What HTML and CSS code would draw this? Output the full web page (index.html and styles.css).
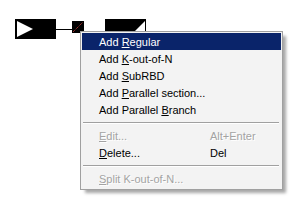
FILE: index.html
```html
<!DOCTYPE html>
<html>
<head>
<meta charset="utf-8">
<link rel="stylesheet" href="styles.css">
</head>
<body>
<div class="canvas">
  <svg class="diagram" width="298" height="60" viewBox="0 0 298 60">
    <rect x="15" y="19" width="41" height="20" fill="#000"/>
    <polygon points="17,21 33,29 17,37" fill="#fff"/>
    <line x1="56" y1="29.5" x2="72" y2="29.5" stroke="#000" stroke-width="1"/>
    <rect x="72" y="21" width="12" height="12" fill="#000"/>
    <line x1="73" y1="32" x2="83" y2="22" stroke="#e04040" stroke-width="1" stroke-dasharray="1 1"/>
    <rect x="105" y="19" width="41" height="20" fill="#000"/>
    <polygon points="145,21 127,39 145,39" fill="#fff"/>
  </svg>
  <div class="menu">
    <div class="item active"><span class="label">Add <u>R</u>egular</span></div>
    <div class="item"><span class="label">Add <u>K</u>-out-of-N</span></div>
    <div class="item"><span class="label">Add <u>S</u>ubRBD</span></div>
    <div class="item"><span class="label">Add <u>P</u>arallel section...</span></div>
    <div class="item"><span class="label">Add Parallel <u>B</u>ranch</span></div>
    <div class="sep"></div>
    <div class="item disabled"><span class="label"><u>E</u>dit...</span><span class="key">Alt+Enter</span></div>
    <div class="item"><span class="label"><u>D</u>elete...</span><span class="key">Del</span></div>
    <div class="sep"></div>
    <div class="item disabled"><span class="label"><u>S</u>plit K-out-of-N...</span></div>
  </div>
</div>
</body>
</html>
```

FILE: styles.css
```css
html, body {
  margin: 0;
  padding: 0;
  background: #fff;
}
.canvas {
  position: relative;
  width: 298px;
  height: 208px;
  overflow: hidden;
  font-family: "Liberation Sans", Arial, sans-serif;
  font-size: 11px;
}
.diagram {
  position: absolute;
  left: 0;
  top: 0;
  display: block;
}
.menu {
  position: absolute;
  left: 80px;
  top: 31px;
  width: 199px;
  border: 1px solid #a0a0a0;
  background: #f3f3f3;
  padding: 1px 1px 2px 1px;
  box-shadow: 4px 4px 3px -1px rgba(0, 0, 0, 0.35);
  display: flex;
  flex-direction: column;
}
.item {
  height: 17px;
  display: flex;
  align-items: center;
  padding-left: 17px;
  color: #000;
  white-space: nowrap;
}
.item .label {
  width: 111px;
}
.item .key {
  flex: none;
}
.item u {
  text-decoration: underline;
  text-underline-offset: 1px;
}
.item.active {
  background: #0a246a;
  color: #fff;
}
.item.disabled {
  color: #a3a3a3;
  text-shadow: 1px 1px 0 #ffffff;
}
.sep {
  height: 9px;
  display: flex;
  align-items: center;
  padding: 0 2px 0 1px;
}
.sep::before {
  content: "";
  flex: 1;
  height: 1px;
  background: #a0a0a0;
  box-shadow: 0 1px 0 #ffffff;
}
```
